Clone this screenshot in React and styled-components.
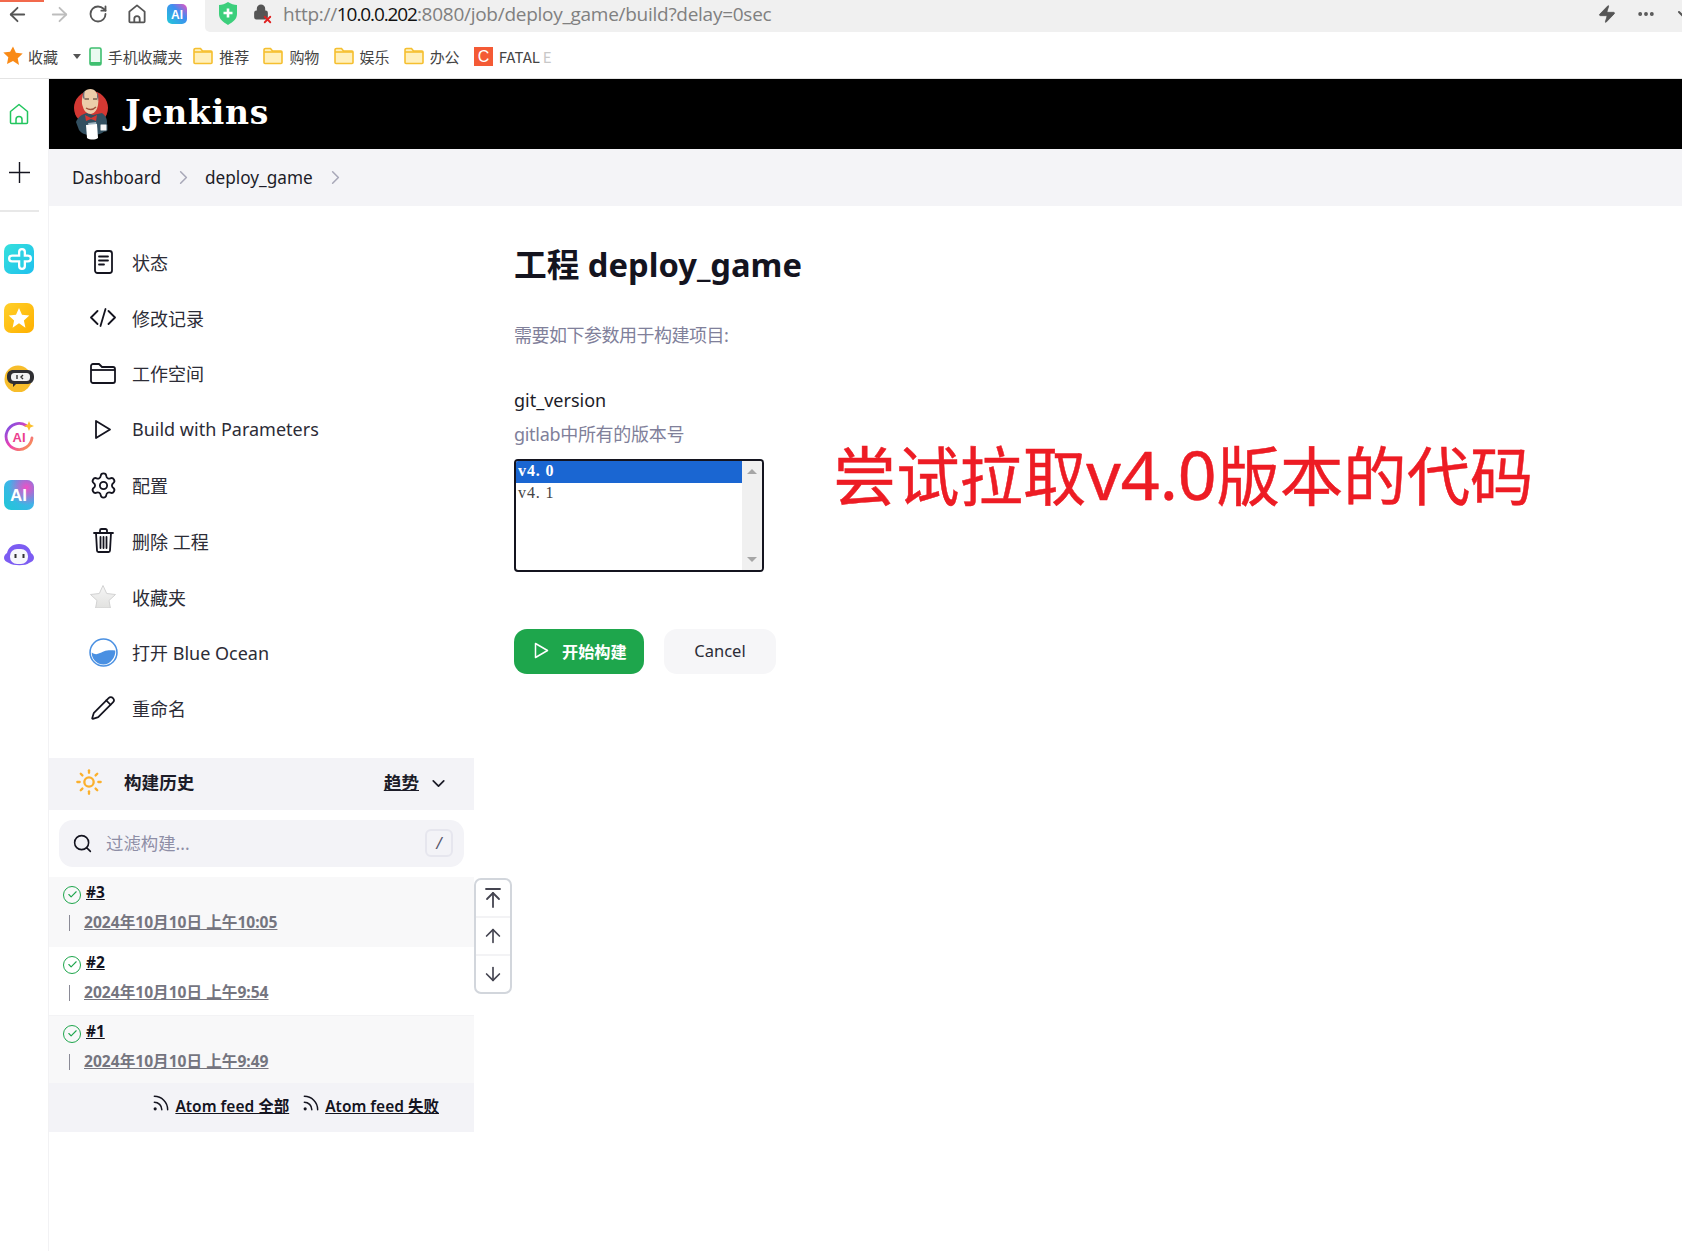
import React from "react";
import styled, { createGlobalStyle } from "styled-components";
import {
  ArrowLeft, ArrowRight, RotateCw, MoreHorizontal, Zap, Settings, Pencil,
  Search, ChevronDown, ChevronRight, Rss, ArrowUp, ArrowDown, ArrowUpToLine, Sun, Check, Lock, X,
} from "lucide-react";

const FONT = `"Noto Sans", "Noto Sans CJK SC", sans-serif`;

const Global = createGlobalStyle`
  html, body { margin: 0; padding: 0; background: #fff; }
  body { width: 1682px; height: 1251px; overflow: hidden; font-family: ${FONT}; color: #14141f; }
  * { box-sizing: border-box; }
  a { color: inherit; }
`;

const Page = styled.div`
  display: flex; flex-direction: column; width: 1682px; height: 1251px; position: relative;
`;
const Progress = styled.div`
  position: absolute; left: 0; top: 0; width: 44px; height: 2px; background: #f2694c;
`;
const TopBar = styled.div`
  display: flex; height: 32px; align-items: stretch;
`;
const NavButtons = styled.div`
  width: 205px; display: flex; align-items: center; padding: 0 0 4px 6px; flex: none;
`;
const NavSlot = styled.span`
  display: flex; width: ${(p) => p.$w}px; color: ${(p) => p.$c || "#555"};
`;
const AddressBar = styled.div`
  flex: 1; display: flex; align-items: center; background: #f0f0f0; border-bottom-left-radius: 5px;
  padding: 0 0 5px 14px; position: relative; min-width: 0;
`;
const LockWrap = styled.span`
  position: relative; display: flex; width: 18px; height: 20px; margin-left: 16px; color: #555;
`;
const LockX = styled.span`
  position: absolute; right: -2px; bottom: -1px; color: #e02020; display: flex;
`;
const Url = styled.span`
  margin-left: 12px; font: 19px "Open Sans", sans-serif; color: #808080; letter-spacing: -0.27px; white-space: nowrap;
  b { font-weight: 400; color: #111; letter-spacing: -1.1px; }
`;
const BarEnd = styled.div`
  margin-left: auto; display: flex; align-items: center; color: #555; gap: 19px; margin-right: -9px;
`;
const Bookmarks = styled.div`
  height: 47px; display: flex; align-items: center; border-bottom: 1px solid #e4e4e4;
  padding: 2px 0 0 3px; font: 15px "Noto Sans CJK SC", sans-serif; color: #444; letter-spacing: -0.1px;
`;
const BookmarkItem = styled.span`
  display: flex; align-items: center; gap: ${(p) => p.$gap ?? 6}px; margin-right: ${(p) => p.$mr ?? 14.3}px; white-space: nowrap;
`;
const Faded = styled.span`
  color: #c8c8c8; margin-left: -3px;
`;
const Caret = styled.span`
  width: 0; height: 0; border-left: 4px solid transparent; border-right: 4px solid transparent;
  border-top: 5px solid #555; margin: 0 8px 0 2px;
`;
const Body = styled.div`
  flex: 1; display: flex; min-height: 0;
`;
const Rail = styled.nav`
  width: 49px; flex: none; border-right: 1px solid #f2f2f4; padding-top: 24px; display: flex; flex-direction: column;
`;
const RailTop = styled.div`
  display: flex; flex-direction: column; align-items: flex-start; padding-left: 9px; gap: 37px;
`;
const RailDivider = styled.div`
  width: 39px; height: 2px; background: #e8e8e8; margin-top: 27px; margin-bottom: 32px;
`;
const RailApps = styled.div`
  display: flex; flex-direction: column; padding-left: 4px; gap: 29px;
`;
const Content = styled.div`
  flex: 1; display: flex; flex-direction: column; min-width: 0;
`;
const Header = styled.header`
  height: 70px; background: #000; display: flex; align-items: center; padding-left: 24px; flex: none;
`;
const Brand = styled.span`
  font: 700 33px "DejaVu Serif", serif; color: #fff; margin-left: 16px; letter-spacing: 0.8px; padding-bottom: 3px;
`;
const Crumbs = styled.div`
  height: 57px; background: #f4f4f7; display: flex; align-items: center; padding-left: 23px; font-size: 17.2px; color: #1c1c28; flex: none;
`;
const CrumbSep = styled.span`
  display: flex; color: #a8a8b8; margin: 0 10px 0 11px;
`;
const Columns = styled.div`
  flex: 1; display: flex; min-height: 0;
`;
const Side = styled.aside`
  width: 425px; flex: none; padding-top: 28px;
`;
const Menu = styled.div`
  display: flex; flex-direction: column; margin-bottom: 21.8px;
`;
const MenuRow = styled.a`
  height: 55.8px; display: flex; align-items: center; padding-left: 41px; gap: 16px; font-size: 18px; color: #2c2c36;
`;
const MenuIcon = styled.span`
  width: 26px; height: 26px; display: flex; align-items: center; justify-content: center; color: #14141f; flex: none;
`;
const Panel = styled.div`
  height: 52px; background: #f3f3f7; display: flex; align-items: center; padding: 0 0 4px 26px; font-weight: 700; font-size: 17.6px;
`;
const PanelTitle = styled.span`
  margin-left: 21px; color: #1c1c28;
`;
const Trend = styled.a`
  margin-left: auto; text-decoration: underline; color: #1c1c28;
`;
const TrendChevron = styled.span`
  display: flex; margin: 4px 25px 0 9px; color: #1c1c28;
`;
const SearchBox = styled.div`
  height: 47px; margin: 10px; background: #f3f3f7; border-radius: 14px; display: flex; align-items: center; padding: 0 11px 0 13px; color: #14141f;
`;
const Placeholder = styled.span`
  margin: 0 0 2px 13px; font-size: 17.4px; color: #8e8ea6;
`;
const KeyHint = styled.span`
  margin-left: auto; width: 28px; height: 28px; border: 2px solid #e6e6ee; border-radius: 6px; display: flex; align-items: center; justify-content: center;
  font-size: 15.5px; font-style: italic; color: #55556a;
`;
const BuildList = styled.div`
  position: relative;
`;
const BuildRow = styled.div`
  height: ${(p) => p.$h}px; background: ${(p) => (p.$shaded ? "#f8f8f9" : "#fff")}; padding: 9px 0 0 14px;
  border-top: ${(p) => (p.$line ? "1px solid #f3f3f5" : "none")};
`;
const BuildHead = styled.div`
  display: flex; align-items: center; gap: 5px; height: 18px;
`;
const StatusDot = styled.span`
  width: 18px; height: 18px; border: 1.7px solid #1ea64c; border-radius: 50%; display: flex; align-items: center; justify-content: center; color: #1ea64c;
`;
const BuildNo = styled.a`
  font-size: 15.4px; font-weight: 700; color: #14141f; text-decoration: underline; margin-top: -5px;
`;
const BuildDateRow = styled.div`
  display: flex; align-items: center; margin-top: 8px; padding-left: 6px; height: 20px;
`;
const Tick = styled.span`
  width: 1px; height: 16px; background: #8a8a96; margin-right: 14px; margin-top: 2px;
`;
const BuildDate = styled.a`
  font-size: 15.6px; font-weight: 700; color: #75757f; text-decoration: underline; white-space: nowrap;
`;
const ScrollNav = styled.div`
  position: absolute; left: 425px; top: 1px; width: 38px; height: 116px; background: #fff; border: 2px solid #d2d6dc; border-radius: 7px;
  display: flex; flex-direction: column; color: #444450;
`;
const ScrollCell = styled.span`
  flex: 1; display: flex; align-items: center; justify-content: center; & + & { border-top: 2px solid #f3f3f5; }
`;
const Feeds = styled.div`
  height: 49px; background: #f3f3f7; display: flex; justify-content: flex-end; align-items: flex-start; padding: 11px 35px 0 0; gap: 12px; font-size: 15.5px; font-weight: 600;
`;
const FeedLink = styled.a`
  display: flex; align-items: center; gap: 4px; color: #14141f;
  u { text-decoration: underline; }
  svg { margin-top: -4px; }
`;
const Main = styled.main`
  flex: 1; padding: 37px 0 0 40px; position: relative; min-width: 0;
`;
const Title = styled.h1`
  margin: 0; font-size: 32.7px; font-weight: 700; line-height: 44px; color: #14141f;
`;
const Lead = styled.p`
  margin: 36px 0 0; font-size: 18px; line-height: 24px; color: #80809a; letter-spacing: -0.5px;
`;
const ParamName = styled.div`
  margin-top: 41px; font-size: 18px; line-height: 24px; color: #1c1c28;
`;
const ParamHint = styled.div`
  margin-top: 10px; font-size: 18px; line-height: 24px; color: #80809a; letter-spacing: -0.3px;
`;
const FormRow = styled.div`
  display: flex; align-items: flex-start; margin-top: 13px;
`;
const ListBox = styled.div`
  width: 250px; height: 113px; border: 2px solid #14141f; border-radius: 4px; display: flex; overflow: hidden; font: 16px "Liberation Serif", serif; flex: none;
`;
const Options = styled.div`
  flex: 1;
`;
const Option = styled.div`
  height: 21.5px; line-height: 19.5px; padding-left: 2px; letter-spacing: 0.9px; white-space: pre;
  background: ${(p) => (p.$on ? "#1a66d2" : "transparent")}; color: ${(p) => (p.$on ? "#fff" : "#444")}; font-weight: ${(p) => (p.$on ? 700 : 400)};
`;
const Scrollbar = styled.div`
  width: 20px; background: #f0f0f0; display: flex; flex-direction: column; justify-content: space-between; align-items: center; padding: 8px 0 8px;
`;
const Arrow = styled.span`
  width: 0; height: 0; border-left: 5px solid transparent; border-right: 5px solid transparent;
  ${(p) => (p.$up ? "border-bottom: 5px solid #a6a6a6;" : "border-top: 5px solid #a6a6a6;")}
`;
const Note = styled.div`
  margin: -33px 0 0 69px; font: 400 63.3px/1.4 "Noto Sans", "Noto Sans CJK SC", sans-serif; color: #ed1c24; white-space: nowrap;
  -webkit-text-stroke: 0.5px #ed1c24;
  span { font-size: 68px; }
`;
const Actions = styled.div`
  display: flex; gap: 20px; margin-top: 57px;
`;
const PrimaryButton = styled.button`
  width: 130px; height: 45px; border: 0; border-radius: 13px; background: #1ea64c; color: #fff; font: 700 16.2px ${FONT};
  display: flex; align-items: center; padding: 0 0 2px 20px; gap: 13px;
`;
const GhostButton = styled.button`
  width: 112px; height: 45px; border: 0; border-radius: 13px; background: #f6f6f8; color: #2c2c36; font: 400 16.5px ${FONT}; padding: 0 0 2px;
`;

const FolderIcon = () => (
  <svg width="20" height="18" viewBox="0 0 20 18">
    <path d="M1 3a1.5 1.5 0 0 1 1.5-1.5h5L9.5 4H18a1 1 0 0 1 1 1v10.5a1 1 0 0 1-1 1H2a1 1 0 0 1-1-1z" fill="#fff0bd" stroke="#f5bf2f" strokeWidth="1.6" />
    <path d="M1 5h18" stroke="#f5bf2f" strokeWidth="1.6" />
  </svg>
);
const HomeOutline = ({ size = 20, color = "#555", strokeWidth = 2 }) => (
  <svg width={size} height={size * 1.1} viewBox="0 0 20 22" fill="none" stroke={color} strokeWidth={strokeWidth} strokeLinejoin="round">
    <path d="M10 1.5 1.5 8.5v11a1 1 0 0 0 1 1h15a1 1 0 0 0 1-1v-11z" />
    <path d="M7 20.5v-4a3 3 0 0 1 6 0v4" />
  </svg>
);
const Shield = () => (
  <svg width="18" height="23" viewBox="0 0 18 23">
    <path d="M9 0 C12 2 15 3 18 3 v9 c0 5-4 8-9 11 -5-3-9-6-9-11 V3 C3 3 6 2 9 0z" fill="#3ccf7c" />
    <path d="M9 6.5v9M4.5 11h9" stroke="#fff" strokeWidth="2.6" />
  </svg>
);
const BrowserAi = () => (
  <svg width="20" height="20" viewBox="0 0 20 20">
    <defs>
      <linearGradient id="ba" x1="0" y1="1" x2="1" y2="0">
        <stop offset="0" stopColor="#21c9d8" /><stop offset=".6" stopColor="#3f8df0" /><stop offset="1" stopColor="#f050c0" />
      </linearGradient>
    </defs>
    <rect width="20" height="20" rx="5" fill="url(#ba)" />
    <text x="10" y="14.5" textAnchor="middle" fontFamily="Liberation Sans" fontWeight="700" fontSize="12" fill="#fff">AI</text>
  </svg>
);
const Phone = () => (
  <svg width="13" height="19" viewBox="0 0 13 19">
    <rect x="1" y="1" width="11" height="17" rx="1.5" fill="#eafaf0" stroke="#3fbf6f" strokeWidth="1.6" />
    <path d="M1 15h11V17a1 1 0 0 1-1 1H2a1 1 0 0 1-1-1z" fill="#3fbf6f" />
  </svg>
);
const OrangeStar = () => (
  <svg width="20" height="20" viewBox="0 0 20 20">
    <path d="M10 .5l2.9 6.3 6.8.8-5 4.7 1.3 6.8L10 15l-6 3.1 1.3-6.800-5-4.700 6.800-.8z" fill="#f98a16" />
  </svg>
);
const CBadge = () => (
  <svg width="19" height="19" viewBox="0 0 19 19">
    <rect width="19" height="19" fill="#f45a35" />
    <text x="9.5" y="15" textAnchor="middle" fontFamily="Liberation Sans" fontSize="16" fill="#fff">C</text>
  </svg>
);
const JenkinsLogo = () => (
  <svg width="36" height="52" viewBox="0 0 36 52">
    <circle cx="18" cy="20" r="17" fill="#d33833" />
    <path d="M3 34c2-5 6-8 11-9l6 2 9-2c3 2 5 5 5 9l-1 8c-3 3-7 5-15 5-6 0-10-2-12-5z" fill="#335061" />
    <path d="M11 4c3-4 10-4 12 0 2 3 3 8 2 13s-3 8-7 9c-4 0-7-3-8-7-2-4-1-11 1-15z" fill="#eccdaa" />
    <path d="M10 10c-1-4 1-7 2-7-1 3-1 5 0 9zM24 4c1 2 2 4 1 9l-1-4z" fill="#6b6f78" />
    <path d="M12 11h4M20 11h4" stroke="#3a2a20" strokeWidth="1.2" />
    <path d="M13 20c3 2 7 2 10-1" stroke="#a0523d" strokeWidth="1.4" fill="none" />
    <path d="M12 27l6 3 6-3-1 6-5-2-5 2z" fill="#d33833" />
    <path d="M15 35l8-1 1 4-8 1z" fill="#9fb4c0" />
    <path d="M13 37l11-1 1 14c-3 2-8 2-11 0z" fill="#fff" />
    <rect x="27" y="36" width="7" height="7" rx="1" fill="#f6f6f6" stroke="#335061" />
  </svg>
);
const StatusDoc = () => (
  <svg width="19" height="24" viewBox="0 0 19 24" fill="none" stroke="#14141f" strokeWidth="1.8" strokeLinecap="round">
    <rect x="1" y="1" width="17" height="22" rx="2.5" />
    <path d="M5 6.5h9M5 10.5h9M5 14.5h5" />
  </svg>
);
const CodeIcon = () => (
  <svg width="26" height="19" viewBox="0 0 26 19" fill="none" stroke="#14141f" strokeWidth="1.8" strokeLinecap="round" strokeLinejoin="round">
    <path d="M7.5 3 1 9.5 7.5 16M18.5 3 25 9.5 18.5 16M15.5 1l-5 17" />
  </svg>
);
const FolderOutline = () => (
  <svg width="26" height="21" viewBox="0 0 26 21" fill="none" stroke="#14141f" strokeWidth="1.8" strokeLinejoin="round">
    <path d="M1 3a2 2 0 0 1 2-2h6l3 3h11a2 2 0 0 1 2 2v12a2 2 0 0 1-2 2H3a2 2 0 0 1-2-2z" />
    <path d="M1 7h24" />
  </svg>
);
const PlayOutline = () => (
  <svg width="18" height="21" viewBox="0 0 18 21" fill="none" stroke="#14141f" strokeWidth="1.8" strokeLinejoin="round">
    <path d="M2 2l14 8.5L2 19z" />
  </svg>
);
const TrashIcon = () => (
  <svg width="21" height="25" viewBox="0 0 21 25" fill="none" stroke="#14141f" strokeWidth="1.8" strokeLinecap="round" strokeLinejoin="round">
    <path d="M1 5h19M7 5V2.5A1.5 1.5 0 0 1 8.5 1h4A1.5 1.5 0 0 1 14 2.5V5" />
    <path d="M3 5l1 17.5A1.5 1.5 0 0 0 5.5 24h10a1.5 1.5 0 0 0 1.5-1.5L18 5" />
    <path d="M7.5 9v11M10.5 9v11M13.5 9v11" />
  </svg>
);
const GreyStar = () => (
  <svg width="26" height="23" viewBox="0 0 26 23">
    <defs>
      <linearGradient id="gs" x1="0" y1="0" x2="0" y2="1">
        <stop offset="0" stopColor="#f6f6f6" /><stop offset="1" stopColor="#e2e2e0" />
      </linearGradient>
    </defs>
    <path d="M13 .5l3.7 8 8.800 1-6.500 6 1.400 7.500H5.600L7 15.500l-6.500-6 8.800-1z" fill="url(#gs)" stroke="#d2d2d2" />
  </svg>
);
const BlueOcean = () => (
  <svg width="29" height="29" viewBox="0 0 28 28" style={{ flex: "none" }}>
    <circle cx="14" cy="14" r="13" fill="#fff" stroke="#4a90e2" strokeWidth="1.5" />
    <path d="M2.600 14c3 2 5 2 8 .5s6-3.500 14.800-2.500c.5 6-4.500 13.500-11.400 13.500S2.500 20 2.600 14z" fill="#4a90e2" />
  </svg>
);
const RailPlus = () => (
  <svg width="21" height="21" viewBox="0 0 21 21" stroke="#14141f" strokeWidth="1.4">
    <path d="M10.5 0v21M0 10.500h21" />
  </svg>
);

const AppTile = ({ id, from, to, children }) => (
  <svg width="30" height="30" viewBox="0 0 30 30">
    <defs>
      <linearGradient id={id} x1="0" y1="0" x2="1" y2="1">
        <stop offset="0" stopColor={from} /><stop offset="1" stopColor={to} />
      </linearGradient>
    </defs>
    <rect width="30" height="30" rx="7" fill={`url(#${id})`} />
    {children}
  </svg>
);
const RobotYellow = () => (
  <svg width="30" height="30" viewBox="0 -3 30 30">
    <circle cx="14" cy="14" r="13.5" fill="#f7bd2b" />
    <path d="M8 5h16a6 6 0 0 1 6 6v2a6 6 0 0 1-6 6H12l-3 3v-3a6 6 0 0 1-6-6v-2a6 6 0 0 1 5-6z" fill="#2f2f33" />
    <rect x="7" y="8" width="19" height="8" rx="3.5" fill="#f2f2f2" />
    <path d="M13 10v4M19 10l-2 2 2 2" stroke="#333" strokeWidth="1.4" fill="none" />
  </svg>
);
const AiRing = () => (
  <svg width="30" height="30" viewBox="0 0 30 30">
    <defs>
      <linearGradient id="ring" x1="0" y1="0" x2="1" y2="1">
        <stop offset="0" stopColor="#6a52ee" /><stop offset=".5" stopColor="#f03fb0" /><stop offset="1" stopColor="#f9a640" />
      </linearGradient>
    </defs>
    <path d="M22 4.500A13 13 0 1 0 28 17" fill="none" stroke="url(#ring)" strokeWidth="2.8" strokeLinecap="round" />
    <path d="M25 0l1.400 3.600L30 5l-3.600 1.400L25 10l-1.400-3.600L20 5l3.600-1.400z" fill="#fbc02d" />
    <text x="15" y="20.5" textAnchor="middle" fontFamily="Liberation Sans" fontWeight="700" fontSize="13" fill="#ec3f8e">AI</text>
  </svg>
);
const RobotPurple = () => (
  <svg width="30" height="30" viewBox="0 -4 30 30">
    <path d="M15 1c7 0 11 4 12 9 2 1 3 3 3 5s-2 4-5 5c-3 3-16 3-20 0-3-1-5-3-5-5s1-4 3-5c1-5 5-9 12-9z" fill="#7c5cf2" />
    <rect x="6" y="6" width="18" height="15" rx="7" fill="#f7f7fb" />
    <path d="M11.5 11v4M19.5 11v4" stroke="#333" strokeWidth="2" />
  </svg>
);

const menu = [
  [<StatusDoc />, "状态"],
  [<CodeIcon />, "修改记录"],
  [<FolderOutline />, "工作空间"],
  [<PlayOutline />, "Build with Parameters"],
  [<Settings size={29} strokeWidth={1.5} style={{ flex: "none" }} />, "配置"],
  [<TrashIcon />, "删除 工程"],
  [<GreyStar />, "收藏夹"],
  [<BlueOcean />, "打开 Blue Ocean"],
  [<Pencil size={26} strokeWidth={1.6} />, "重命名"],
];
const builds = [
  { no: "#3", date: "2024年10月10日 上午10:05", h: 70, shaded: true },
  { no: "#2", date: "2024年10月10日 上午9:54", h: 68 },
  { no: "#1", date: "2024年10月10日 上午9:49", h: 68, shaded: true, line: true },
];

function PlaySmall() {
  return (
    <svg width="15" height="17" viewBox="0 0 15 17" fill="none" stroke="#fff" strokeWidth="1.5" strokeLinejoin="round">
      <path d="M1.500 1.500l12 7-12 7z" />
    </svg>
  );
}

export default function App() {
  return (
    <Page>
      <Global />
      <Progress />
      <TopBar>
        <NavButtons>
          <NavSlot $w={42}><ArrowLeft size={23} strokeWidth={1.9} /></NavSlot>
          <NavSlot $w={40} $c="#bdbdbd"><ArrowRight size={23} strokeWidth={1.9} /></NavSlot>
          <NavSlot $w={40}><RotateCw size={20} strokeWidth={2.2} /></NavSlot>
          <NavSlot $w={39}><HomeOutline size={18} /></NavSlot>
          <BrowserAi />
        </NavButtons>
        <AddressBar>
          <Shield />
          <LockWrap>
            <Lock size={16} strokeWidth={2.6} fill="#555" />
            <LockX><X size={11} strokeWidth={4} /></LockX>
          </LockWrap>
          <Url>http://<b>10.0.0.202</b>:8080/job/deploy_game/build?delay=0sec</Url>
          <BarEnd>
            <Zap size={20} fill="#555" strokeWidth={1} />
            <MoreHorizontal size={20} strokeWidth={2.6} />
            <ChevronDown size={16} strokeWidth={3} />
          </BarEnd>
        </AddressBar>
      </TopBar>
      <Bookmarks>
        <BookmarkItem $mr={13} $gap={5}><OrangeStar />收藏</BookmarkItem>
        <Caret />
        <BookmarkItem $mr={11}><Phone />手机收藏夹</BookmarkItem>
        {["推荐", "购物", "娱乐", "办公"].map((t) => (
          <BookmarkItem key={t}><FolderIcon />{t}</BookmarkItem>
        ))}
        <BookmarkItem $mr={0}><CBadge />FATAL<Faded>E</Faded></BookmarkItem>
      </Bookmarks>
      <Body>
        <Rail>
          <RailTop>
            <HomeOutline size={20} color="#22c55e" strokeWidth={1.5} />
            <RailPlus />
          </RailTop>
          <RailDivider />
          <RailApps>
            <AppTile id="t1" from="#35e0dc" to="#1fc0ee">
              <path d="M18 8v14M8 14.500h16" stroke="#fff" strokeWidth="8" strokeLinecap="round" fill="none" />
              <path d="M18 8v14M8 14.500h16" stroke="#2ad0e4" strokeWidth="3.4" strokeLinecap="round" fill="none" />
            </AppTile>
            <AppTile id="t2" from="#ffd02a" to="#ffb000">
              <path d="M15 5l3 6.800 7.300.8-5.400 5 1.500 7.200L15 20.300 8.600 24.800l1.500-7.200-5.400-5 7.300-.8z" fill="#fff" />
            </AppTile>
            <RobotYellow />
            <AiRing />
            <svg width="30" height="30" viewBox="0 0 30 30">
              <defs>
                <linearGradient id="t5" x1="0" y1="1" x2="1" y2="0">
                  <stop offset="0" stopColor="#1fc8d6" /><stop offset=".55" stopColor="#3db4e8" /><stop offset="1" stopColor="#3b8ff0" />
                </linearGradient>
                <radialGradient id="t5p" cx=".75" cy=".25" r=".6">
                  <stop offset="0" stopColor="#f04fc4" /><stop offset="1" stopColor="#f04fc4" stopOpacity="0" />
                </radialGradient>
              </defs>
              <rect width="30" height="30" rx="7" fill="url(#t5)" />
              <rect width="30" height="30" rx="7" fill="url(#t5p)" />
              <text x="14.5" y="21" textAnchor="middle" fontFamily="Liberation Sans" fontWeight="700" fontSize="17" fill="#fff">AI</text>
            </svg>
            <RobotPurple />
          </RailApps>
        </Rail>
        <Content>
          <Header>
            <JenkinsLogo />
            <Brand>Jenkins</Brand>
          </Header>
          <Crumbs>
            Dashboard
            <CrumbSep><ChevronRight size={23} strokeWidth={1.6} /></CrumbSep>
            deploy_game
            <CrumbSep><ChevronRight size={23} strokeWidth={1.6} /></CrumbSep>
          </Crumbs>
          <Columns>
            <Side>
              <Menu>
                {menu.map(([icon, label]) => (
                  <MenuRow key={label}>
                    <MenuIcon>{icon}</MenuIcon>
                    {label}
                  </MenuRow>
                ))}
              </Menu>
              <Panel>
                <Sun size={28} color="#fbb02d" strokeWidth={2} />
                <PanelTitle>构建历史</PanelTitle>
                <Trend>趋势</Trend>
                <TrendChevron><ChevronDown size={21} strokeWidth={2} /></TrendChevron>
              </Panel>
              <SearchBox>
                <Search size={21} strokeWidth={1.8} />
                <Placeholder>过滤构建...</Placeholder>
                <KeyHint>/</KeyHint>
              </SearchBox>
              <BuildList>
                {builds.map((b) => (
                  <BuildRow key={b.no} $h={b.h} $shaded={b.shaded} $line={b.line}>
                    <BuildHead>
                      <StatusDot><Check size={11} strokeWidth={2.4} /></StatusDot>
                      <BuildNo>{b.no}</BuildNo>
                    </BuildHead>
                    <BuildDateRow>
                      <Tick />
                      <BuildDate>{b.date}</BuildDate>
                    </BuildDateRow>
                  </BuildRow>
                ))}
                <ScrollNav>
                  <ScrollCell><ArrowUpToLine size={24} strokeWidth={1.8} /></ScrollCell>
                  <ScrollCell><ArrowUp size={22} strokeWidth={1.8} /></ScrollCell>
                  <ScrollCell><ArrowDown size={22} strokeWidth={1.8} /></ScrollCell>
                </ScrollNav>
              </BuildList>
              <Feeds>
                <FeedLink><Rss size={20} strokeWidth={1.8} /><u>Atom feed 全部</u></FeedLink>
                <FeedLink><Rss size={20} strokeWidth={1.8} /><u>Atom feed 失败</u></FeedLink>
              </Feeds>
            </Side>
            <Main>
              <Title>工程 deploy_game</Title>
              <Lead>需要如下参数用于构建项目:</Lead>
              <ParamName>git_version</ParamName>
              <ParamHint>gitlab中所有的版本号</ParamHint>
              <FormRow>
                <ListBox>
                  <Options>
                    <Option $on>v4. 0</Option>
                    <Option>v4. 1</Option>
                  </Options>
                  <Scrollbar><Arrow $up /><Arrow /></Scrollbar>
                </ListBox>
                <Note>尝试拉取<span>v4.0</span>版本的代码</Note>
              </FormRow>
              <Actions>
                <PrimaryButton><PlaySmall />开始构建</PrimaryButton>
                <GhostButton>Cancel</GhostButton>
              </Actions>
            </Main>
          </Columns>
        </Content>
      </Body>
    </Page>
  );
}
